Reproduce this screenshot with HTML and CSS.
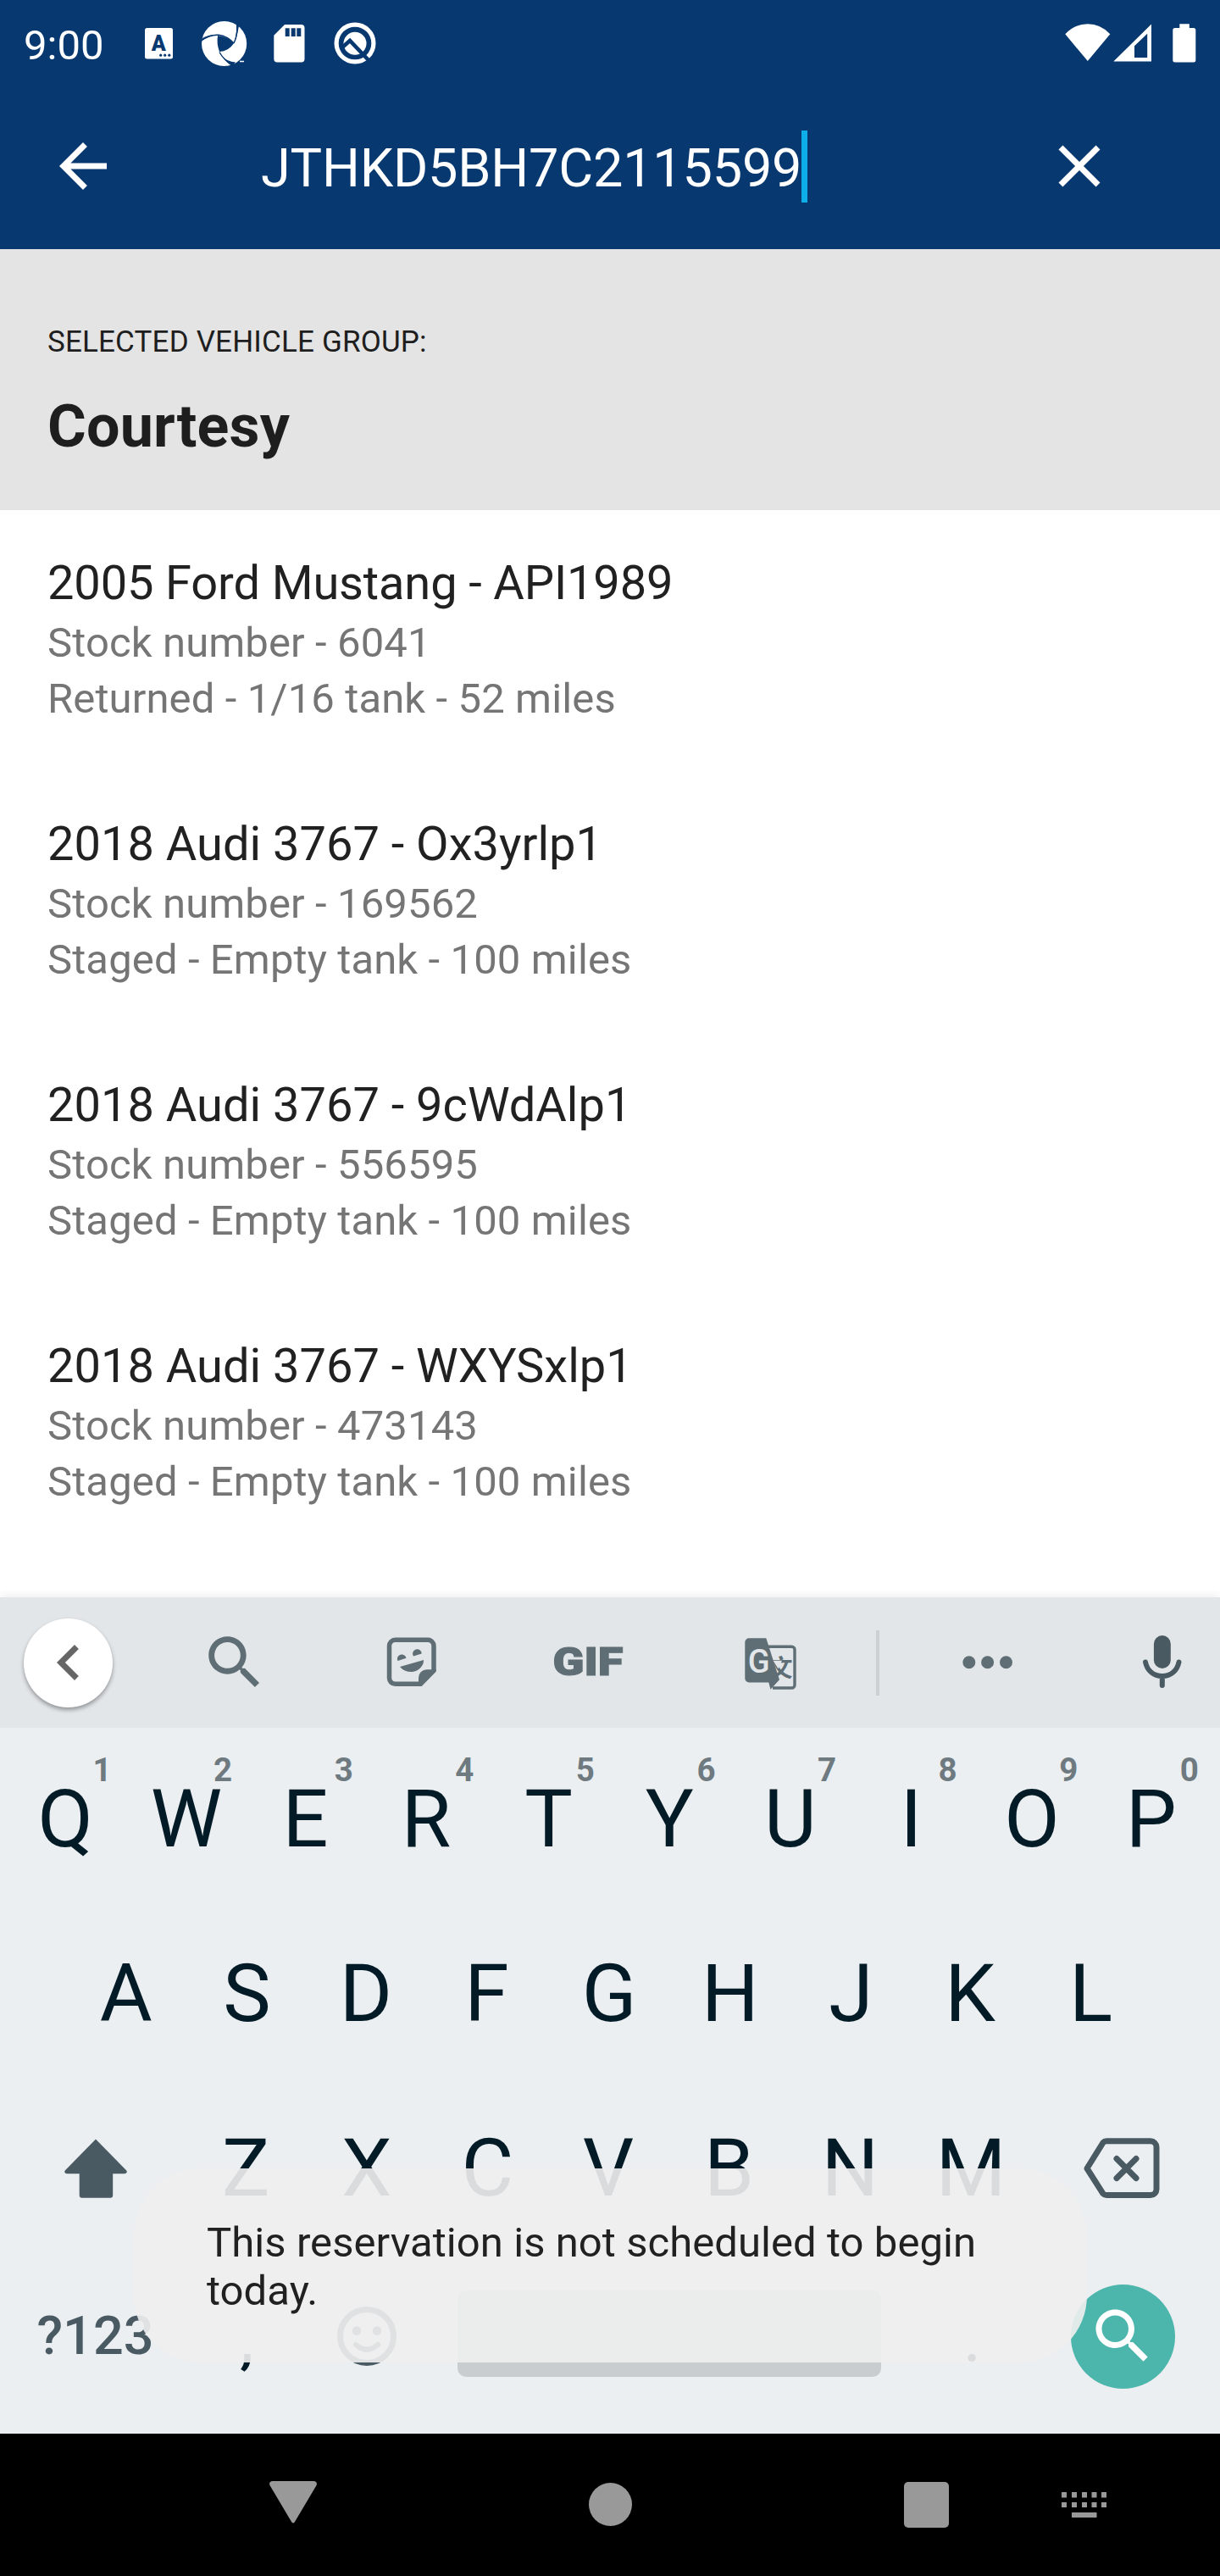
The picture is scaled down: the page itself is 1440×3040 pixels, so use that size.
FILE: index.html
```html
<!DOCTYPE html>
<html lang="en">
<head>
<meta charset="utf-8">
<title>Vehicle search</title>
<link rel="stylesheet" href="styles.css">
</head>
<body>
<div class="screen">
  <header class="top">
    <div class="status">
      <span class="clock">9:00</span>
      <svg class="s-letter" width="33" height="60" viewBox="171 22 33 60"><rect x="171" y="33" width="33" height="36.6" rx="2.5" fill="#fff"/><text x="187.3" y="59.6" text-anchor="middle" font-size="25" font-weight="900" fill="#073870">A</text><g fill="#073870"><circle cx="189.7" cy="65.2" r="1.6"/><circle cx="194.7" cy="65.2" r="1.6"/><circle cx="199.8" cy="65.2" r="1.6"/></g></svg>
      <svg class="s-shutter" width="54" height="60" viewBox="238 22 54 60"><circle cx="264.6" cy="51.5" r="26.6" fill="#fff"/><path d="M257 42Q268 43 276 51Q270 60.500 259 61Q255.500 52 257 42z" fill="#073870"/><path d="M237 48.500Q247 40.500 258 41.300Q268 42.500 276 51M276 51Q281 42 279.500 27M259 61.500Q264 71 275 77" fill="none" stroke="#073870" stroke-width="1.4"/><path d="M279 28L282 30Q280.500 42 276 50Q280 40 279 28zM237 49L239 45Q246 41 255 41Q245 43 237 49zM262 66Q268 73 278 73.500L274 78Q267 74 262 66z" fill="#073870"/><path d="M283 72.500h5" stroke="#fff" stroke-width="1.5"/></svg>
      <svg class="s-sd" width="37" height="60" viewBox="323 22 37 60"><path fill="#fff" fill-rule="evenodd" d="M336 29H355.500a4 4 0 0 1 4 4V69.500a4 4 0 0 1-4 4H327.300a4 4 0 0 1-4-4V41.700zM336.700 33.300V43h5v-9.700zM343.700 33.300V43h5v-9.700zM350.300 33.300V43h5v-9.700z"/></svg>
      <svg class="s-quick" width="50" height="60" viewBox="393.500 22 50 60"><circle cx="418.500" cy="51" r="21.900" fill="none" stroke="#fff" stroke-width="5.200"/><circle cx="418.500" cy="51.200" r="13.500" fill="#fff"/><path d="M404 55.500L412.500 48L434 70.500" fill="none" stroke="#073870" stroke-width="4.600"/></svg>
      <span class="spacer"></span>
      <svg class="s-wifi" width="54" height="60" viewBox="1257.700 22 54 60"><path fill="#fff" d="M1284.500 72L1258 40.300Q1269 28.300 1284.500 28.300T1311 40.300z"/></svg>
      <svg class="s-cell" width="45" height="60" viewBox="1315 22 45 60"><path fill="#fff" fill-rule="evenodd" d="M1315.300 72.500L1360 28.500V72.500zM1340 54.300V68H1355.200V39.700z"/></svg>
      <svg class="s-batt" width="28" height="60" viewBox="1384.700 22 28 60"><path fill="#fff" d="M1393 28.300h11.500V33h5a2.500 2.500 0 0 1 2.500 2.500V71a2.500 2.500 0 0 1-2.500 2.500h-22a2.500 2.500 0 0 1-2.500-2.500V35.500a2.500 2.500 0 0 1 2.500-2.500h5.500z"/></svg>
    </div>
    <div class="appbar">
      <svg class="back" width="84" height="84" viewBox="0 0 24 24"><path fill="#fff" d="M20 11H7.830l5.590-5.590L12 4l-8 8 8 8 1.410-1.410L7.830 13H20v-2z"/></svg>
      <div class="query"><span>JTHKD5BH7C2115599</span><i class="caret"></i></div>
      <svg class="close" width="84" height="84" viewBox="0 0 24 24"><path fill="#fff" d="M19 6.410L17.590 5 12 10.590 6.410 5 5 6.410 10.590 12 5 17.590 6.410 19 12 13.410 17.590 19 19 17.590 13.410 12z"/></svg>
    </div>
  </header>

  <section class="group">
    <div class="group-label">SELECTED VEHICLE GROUP:</div>
    <div class="group-name">Courtesy</div>
  </section>

  <main class="list">
    <article class="item"><h2 class="tight">2005 Ford Mustang - API1989</h2><p>Stock number - 6041</p><p>Returned - 1/16 tank - 52 miles</p></article>
    <article class="item"><h2>2018 Audi 3767 - Ox3yrlp1</h2><p>Stock number - 169562</p><p>Staged - Empty tank - 100 miles</p></article>
    <article class="item"><h2>2018 Audi 3767 - 9cWdAlp1</h2><p>Stock number - 556595</p><p>Staged - Empty tank - 100 miles</p></article>
    <article class="item"><h2>2018 Audi 3767 - WXYSxlp1</h2><p>Stock number - 473143</p><p>Staged - Empty tank - 100 miles</p></article>
  </main>

  <section class="keyboard">
    <div class="strip">
      <div class="collapse"><svg width="84" height="84" viewBox="0 0 24 24"><path fill="#666" d="M15.410 7.410L14 6l-6 6 6 6 1.410-1.410L10.830 12z"/></svg></div>
      <svg class="t-search" width="82" height="82" viewBox="0 0 24 24"><path fill="#5f6e75" d="M15.500 14h-.79l-.28-.27C15.410 12.590 16 11.110 16 9.500 16 5.910 13.090 3 9.500 3S3 5.910 3 9.500 5.910 16 9.500 16c1.610 0 3.090-.59 4.230-1.570l.27.28v.79l5 4.990L20.490 19l-4.990-5zm-6 0C7.010 14 5 11.990 5 9.500S7.010 5 9.500 5 14 7.010 14 9.500 11.990 14 9.500 14z"/></svg>
      <svg class="t-sticker" width="60" height="154" viewBox="456 1885 60 154"><path d="M496.500 1987.300H466.500a7 7 0 0 1-7-7V1942.300a7 7 0 0 1 7-7H505a7 7 0 0 1 7 7V1972" fill="none" stroke="#5f6e75" stroke-width="5.500"/><path fill="#5f6e75" d="M514.700 1970.200V1972.700L497.700 1990H494V1980a9.800 9.800 0 0 1 9.800-9.800zM469.500 1960a5.300 5.300 0 1 1 10-3.200zM488 1954.500a5.300 5.300 0 1 1 9.700-3zM472 1967L500 1959C500.500 1966.500 493 1973 485.500 1973Q477 1973 472 1967z"/></svg>
      <svg class="t-gif" width="84" height="154" viewBox="652 1885 84 154"><text x="652.500" y="1977" font-size="46" font-weight="900" fill="#5f6e75" stroke="#5f6e75" stroke-width="1.200" textLength="83" lengthAdjust="spacingAndGlyphs">GIF</text></svg>
      <svg class="t-translate" width="62" height="154" viewBox="879 1885 62 154"><path d="M906 1943.200H934.500a3.500 3.500 0 0 1 3.500 3.500V1988.500a3.500 3.500 0 0 1-3.500 3.500H912" fill="none" stroke="#5f6e75" stroke-width="3.400"/><text x="921.500" y="1979" text-anchor="middle" class="cjk" font-size="28" fill="#5f6e75">文</text><path fill="#5f6e75" d="M884 1933.300H904.300L920 1982.300L909.500 1993.700L907.300 1985.500H884a4.700 4.700 0 0 1-4.700-4.700V1938a4.700 4.700 0 0 1 4.700-4.700z"/><path fill="#e2e6e9" d="M912.500 1959.800h10.500l-4.500 9.500z"/><text x="895.800" y="1974" text-anchor="middle" font-size="38" font-weight="500" fill="#e2e6e9">G</text></svg>
      <i class="divider"></i>
      <svg class="t-more" width="60" height="154" viewBox="1136 1885 60 154"><g fill="#5f6e75"><circle cx="1143.800" cy="1961.700" r="7.500"/><circle cx="1165.600" cy="1961.700" r="7.500"/><circle cx="1187.500" cy="1961.700" r="7.500"/></g></svg>
      <svg class="t-mic" width="46" height="154" viewBox="1348.500 1885 46 154"><rect x="1361.400" y="1930" width="19.900" height="39" rx="9.950" fill="#4a5a62"/><path d="M1351.500 1961.500C1353.500 1971.500 1361 1978 1371.300 1978S1389 1971.500 1391 1961.500M1371.300 1978V1989" fill="none" stroke="#4a5a62" stroke-width="6" stroke-linecap="round"/></svg>
    </div>

    <div class="row row1">
      <div class="key">Q<sup>1</sup></div><div class="key">W<sup>2</sup></div><div class="key stem">E<sup>3</sup></div><div class="key stem">R<sup>4</sup></div><div class="key">T<sup>5</sup></div><div class="key">Y<sup>6</sup></div><div class="key">U<sup>7</sup></div><div class="key">I<sup>8</sup></div><div class="key">O<sup>9</sup></div><div class="key stem">P<sup>0</sup></div>
    </div>
    <div class="row row2">
      <div class="key">A</div><div class="key">S</div><div class="key stem">D</div><div class="key stem">F</div><div class="key">G</div><div class="key">H</div><div class="key">J</div><div class="key stem">K</div><div class="key stem">L</div>
    </div>
    <div class="row row3">
      <div class="key wide"><svg width="76" height="72" viewBox="75 2518 76 72"><path fill="#4a5a62" d="M113 2519.500L149.300 2556.500Q151 2560 147 2560.200H133.200V2585.700a3 3 0 0 1-3 3H96.700a3 3 0 0 1-3-3V2560.200H79Q75 2560 76.700 2556.500z"/></svg></div>
      <div class="key">Z</div><div class="key">X</div><div class="key">C</div><div class="key">V</div><div class="key">B</div><div class="key">N</div><div class="key">M</div>
      <div class="key wide"><svg width="92" height="74" viewBox="1278 2521 92 74"><path d="M1283 2558L1302 2527.500Q1303.500 2525.800 1306 2525.800H1358a7 7 0 0 1 7 7V2582.500a7 7 0 0 1-7 7H1306Q1303.500 2589.500 1302 2587.800zM1318 2546.500L1341 2569.500M1341 2546.500L1318 2569.500" fill="none" stroke="#4a5a62" stroke-width="7" stroke-linejoin="round" stroke-linecap="round"/></svg></div>
    </div>
    <div class="row row4">
      <div class="key wide mode">?123</div>
      <div class="key punct">,</div>
      <div class="key"><svg width="70" height="70" viewBox="0 0 70 70"><circle cx="35" cy="35" r="31.500" fill="none" stroke="#4a5a62" stroke-width="7"/><circle cx="23" cy="28.500" r="5.200" fill="#4a5a62"/><circle cx="47" cy="28.500" r="5.200" fill="#4a5a62"/><path d="M22 45Q35 56.500 48 45" fill="none" stroke="#4a5a62" stroke-width="6" stroke-linecap="round"/></svg></div>
      <div class="space"></div>
      <div class="key punct">.</div>
      <div class="key wide"><div class="go"><svg width="84" height="84" viewBox="0 0 24 24"><path fill="#fff" d="M15.500 14h-.79l-.28-.27C15.410 12.590 16 11.110 16 9.500 16 5.910 13.090 3 9.500 3S3 5.910 3 9.500 5.910 16 9.500 16c1.610 0 3.090-.59 4.230-1.570l.27.28v.79l5 4.990L20.490 19l-4.990-5zm-6 0C7.010 14 5 11.990 5 9.500S7.010 5 9.500 5 14 7.010 14 9.500 11.990 14 9.500 14z"/></svg></div></div>
    </div>
  </section>

  <nav class="navbar">
    <svg class="n-back" width="56" height="50" viewBox="0 0 56 50"><path fill="#999" d="M3 0H53Q57 1 55.500 5L30 48Q28 51 26 48L.5 5Q-1 1 3 0z"/></svg>
    <i class="n-home"></i>
    <i class="n-recent"></i>
    <svg class="n-keys" width="54" height="30" viewBox="0 0 54 30"><path fill="#999" d="M0 0h6v6.500H0zM12 0h6v6.500h-6zM24 0h6v6.500h-6zM35.500 0h6v6.500h-6zM47 0h6v6.500h-6zM0 12h6v6H0zM12 12h6v6h-6zM24 12h6v6h-6zM35.500 12h6v6h-6zM47 12h6v6h-6zM12 24h29.500v6H12z"/></svg>
  </nav>

  <div class="toast">This reservation is not scheduled to begin today.</div>
</div>
</body>
</html>
```
FILE: styles.css
```css
* { box-sizing: border-box; }
body { margin: 0; font-family: Roboto, "Liberation Sans", sans-serif; }
svg { display: block; flex: none; }
i { display: block; flex: none; }
.cjk { font-family: "Noto Sans CJK SC", sans-serif; font-weight: 700; }

.screen { position: relative; width: 1440px; height: 3040px; background: #fff; overflow: hidden; display: flex; flex-direction: column; }

.top { height: 294px; background: #073870; color: #fff; }
.status { height: 84px; padding: 20px 28px 0; display: flex; align-items: center; }
.clock { width: 94px; font-size: 49px; line-height: 58px; margin-top: 3px; white-space: nowrap; }
.s-letter { margin-left: 49px; }
.s-shutter { margin-left: 34px; }
.s-sd { margin-left: 31px; }
.s-quick { margin-left: 33.5px; }
.spacer { flex: 1; }
.s-cell { margin-left: 3.3px; }
.s-batt { margin-left: 24.7px; }

.appbar { height: 210px; padding: 14px 124px 0 56px; display: flex; align-items: center; }
.query { flex: 1; margin-left: 168px; display: flex; align-items: center; font-size: 63px; line-height: 74px; letter-spacing: -.22px; }
.query span { margin-top: 5px; }
.caret { width: 7px; height: 85px; background: #0eaeea; }

.group { height: 308px; padding: 89px 56px 0; background: #e4e4e4; color: #1e1e1e; }
.group-label { font-size: 35px; line-height: 42px; letter-spacing: .17px; }
.group-name { margin-top: 37px; font-size: 70px; line-height: 82px; font-weight: 700; letter-spacing: .2px; }

.list { height: 1283px; overflow: hidden; }
.item { height: 308px; padding: 53px 56px 0; }
.item h2 { margin: 0 0 5px; font-size: 56px; line-height: 66px; font-weight: 400; color: #212121; }
.item .tight { letter-spacing: -.14px; }
.item p { margin: 0; font-size: 49px; line-height: 66px; color: #757575; letter-spacing: .12px; }

.keyboard { position: relative; height: 987px; background: #ebeff2; color: #031b26; box-shadow: 0 -2px 10px rgba(0, 0, 0, .07); }
.strip { height: 154px; padding-left: 28px; background: #e2e6e9; display: flex; align-items: center; margin-bottom: 5px; }
.collapse { width: 105px; height: 105px; border-radius: 50%; background: #fff; box-shadow: 0 3px 5px rgba(0, 0, 0, .35); display: flex; align-items: center; justify-content: center; }
.t-search { margin-left: 103px; }
.t-sticker { margin-left: 138px; }
.t-gif { margin-left: 136px; }
.t-translate { margin-left: 143px; }
.divider { width: 4px; height: 77px; margin-left: 93px; background: #cbd0d3; }
.t-more { margin-left: 98px; }
.t-mic { margin-left: 152.5px; }

.row { height: 206px; padding-left: 6px; display: flex; align-items: center; }
.row2 { padding-left: 77.5px; }
.key { position: relative; width: 142.6px; height: 206px; flex: none; display: flex; align-items: center; justify-content: center; font-size: 95px; line-height: 112px; }
.stem { padding-right: 4px; }
.wide { width: 213px; }
.key sup { position: absolute; left: 93px; top: 22px; width: 43px; text-align: center; font-size: 38.5px; line-height: 46px; font-weight: 700; color: #6e7a80; }
.row4 { height: 190px; }
.row4 .key { height: 190px; }
.row4 .mode { font-size: 63px; font-weight: 500; color: #4a5a62; }
.row4 .punct { font-size: 84px; padding: 3px 0 0 2px; }
.space { width: 500px; height: 102px; margin: 0 35px 6px 36px; border-radius: 10px; background: #c9cdd0; }
.go { width: 123px; height: 123px; margin-left: 2px; border-radius: 50%; background: #4db6ac; display: flex; align-items: center; justify-content: center; }

.navbar { height: 168px; background: #000; display: flex; padding-left: 318px; }
.n-back { margin-top: 56px; }
.n-home { width: 51px; height: 51px; margin: 58px 0 0 320.5px; border-radius: 50%; background: #999; }
.n-recent { width: 53px; height: 54px; margin: 57px 0 0 321.5px; border-radius: 5px; background: #999; }
.n-keys { margin: 69px 0 0 133px; }

.toast { position: absolute; left: 157.5px; top: 2559px; width: 1125px; height: 229px; padding: 59px 80px 50px 86.5px; border-radius: 79px; background: rgba(238, 238, 238, .91); color: #212121; font-size: 49px; line-height: 57px; letter-spacing: .06px; }
```
